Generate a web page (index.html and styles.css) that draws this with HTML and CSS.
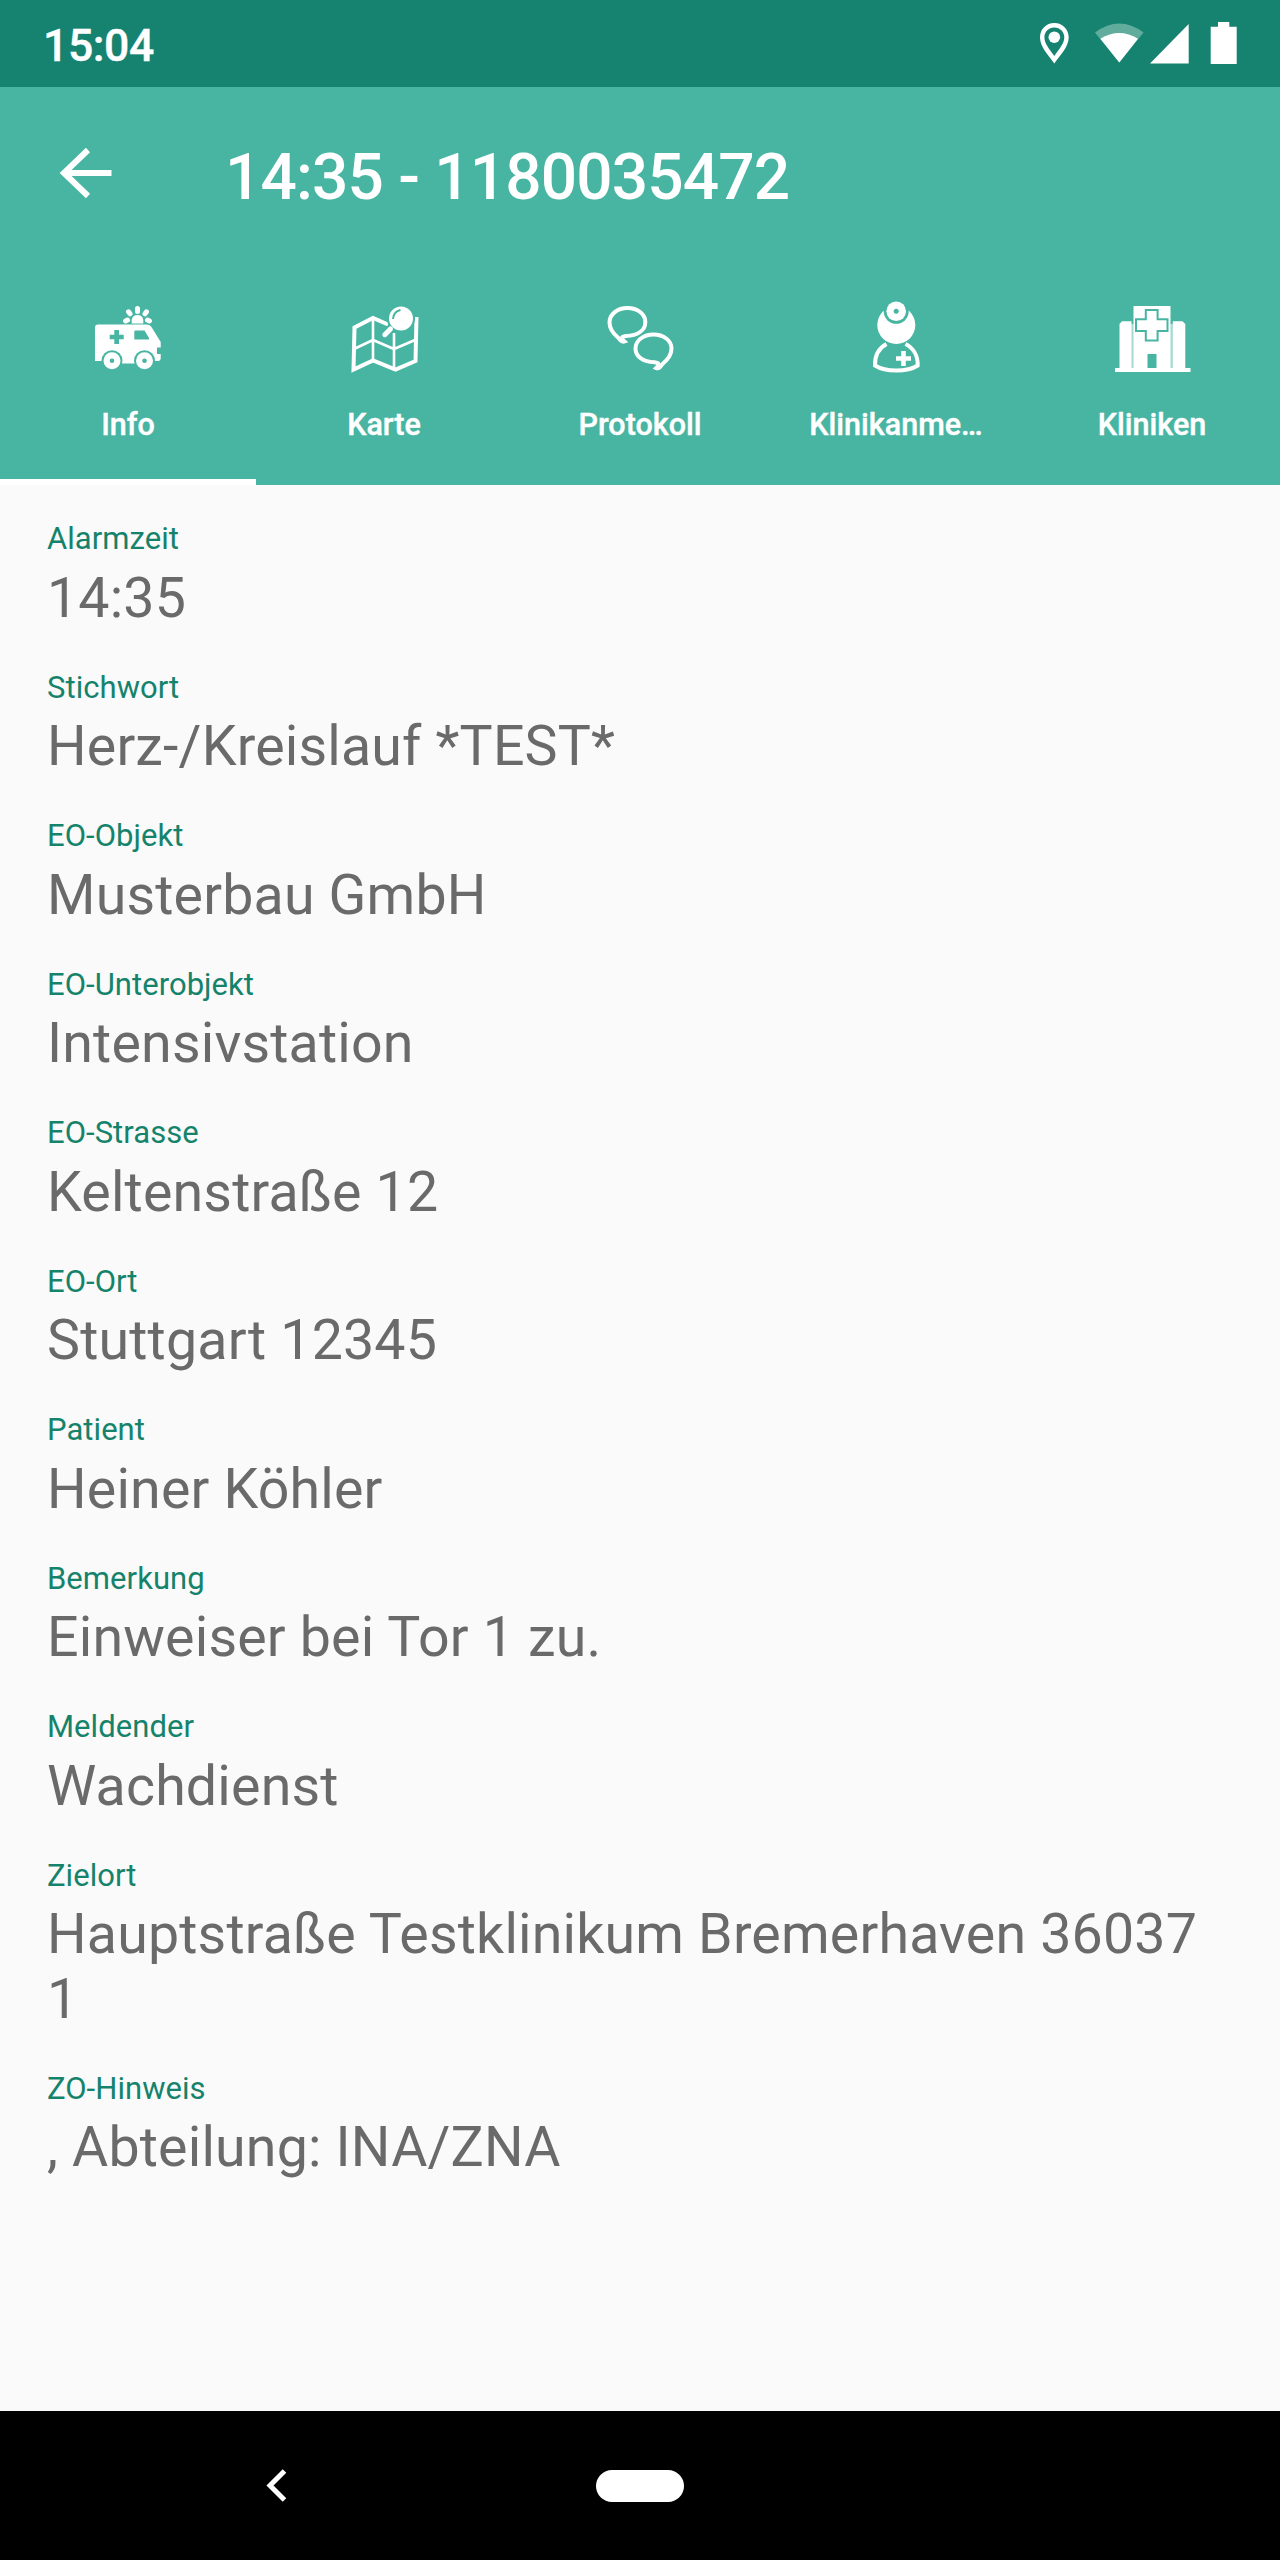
FILE: index.html
```html
<!DOCTYPE html>
<html lang="de">
<head>
<meta charset="utf-8">
<title>14:35 - 1180035472</title>
<link rel="stylesheet" href="styles.css">
</head>
<body>
<div class="screen">
  <div class="status-bar">
    <span class="clock">15:04</span>
    <svg class="status-icons" viewBox="1030 0 220 87">
      <path fill-rule="evenodd" d="M1054.3 23C1046 23 1040 29.300 1040 37.300C1040 47 1047.500 54 1054.300 63.500C1061 54 1068.700 47 1068.700 37.300C1068.700 29.300 1062.500 23 1054.300 23ZM1054.300 27.500C1060 27.500 1064.300 31.800 1064.300 37.300C1064.300 43.500 1059.500 48.500 1054.300 56C1049 48.500 1044.400 43.500 1044.400 37.300C1044.400 31.800 1048.700 27.500 1054.300 27.500Z"/>
      <circle cx="1054.300" cy="37.200" r="5.800"/>
      <path class="faint" d="M1095 32.500Q1119.300 14.500 1143.500 32.500L1119.300 62.500Z"/>
      <path d="M1100.300 38.800Q1119.300 27 1138 38.800L1119.300 62.500Z"/>
      <path d="M1150 63.500L1188.700 24V63.500Z"/>
      <path d="M1218 22H1229.300V26.700H1236.700V64H1210.700V26.700H1218Z"/>
    </svg>
  </div>

  <header class="app-bar">
    <div class="toolbar">
      <svg class="back" viewBox="56 145 60 56"><path d="M88 150L64 173L88 196M64 173H111.500"/></svg>
      <h1 class="title">14:35 - 1180035472</h1>
    </div>
    <nav class="tabs">
      <a class="tab active">
        <svg class="tab-icon" viewBox="88 298 80 80">
          <path d="M98 324.500H147Q150 324.500 151.500 327L160.700 342V347.500H157V354H160.700V358Q160.700 361 158 361H95V327.500Q95 324.500 98 324.500Z"/>
          <path d="M118 356H139V363.500H118Z"/>
          <circle class="cut" cx="112" cy="360.700" r="10.500"/><circle class="cut" cx="144.500" cy="360.700" r="10.500"/>
          <circle cx="112" cy="360.700" r="8.500"/><circle cx="144.500" cy="360.700" r="8.500"/>
          <circle class="cut" cx="112" cy="360.700" r="2.300"/><circle class="cut" cx="144.500" cy="360.700" r="2.300"/>
          <path class="cut" d="M114.300 330H119V334.700H123.700V339.300H119V344H114.300V339.300H109.700V334.700H114.300ZM135.500 330.500H144.500L149 338V339.500H134.300V331.700Q134.300 330.500 135.500 330.500Z"/>
          <path d="M131.700 323.500V320Q132.500 315 137.500 315Q142.500 315 143.300 320V323.500Z"/>
          <path class="rays" d="M137.500 308.500V311.500M128.500 311.800L130 313.800M146.500 311.800L145 313.800M125.500 321L127.500 320M149.500 321L147.500 320"/>
        </svg>
        <span class="tab-label">Info</span>
      </a>
      <a class="tab">
        <svg class="tab-icon" viewBox="344 298 80 80">
          <path class="line" d="M388 324.500L373 318L354.500 327.500L353.500 369.500L373 360.500L395.500 369.500L415.500 361L416.500 317"/>
          <path class="thin" d="M373 318V360.500M394 333V369M355 348.500L373 340L394 349L415 340"/>
          <circle class="cut" cx="401" cy="318.500" r="14"/>
          <circle cx="401" cy="318.500" r="12"/>
          <path class="shine" d="M393 319Q393.500 311.500 400.500 310"/>
          <path class="handle" d="M390.500 329L384.800 334.700"/>
        </svg>
        <span class="tab-label">Karte</span>
      </a>
      <a class="tab">
        <svg class="tab-icon" viewBox="600 298 80 80">
          <path class="line" d="M618.500 338C613 333.500 609.500 328.500 609.500 322.500C609.500 314 617.500 308 627.500 308C637.500 308 645.300 314 645.300 322C645.300 331 637 335.500 626 336C621 336.500 621 338.500 624.500 341.500C622 342.500 620.500 341 618.500 338Z"/>
          <path class="line" d="M662.500 364C668 359.500 671.500 354.500 671.500 348.500C671.500 340.500 663.500 334.500 653.500 334.500C643.500 334.500 635.500 340.500 635.500 348.500C635.500 357 643.500 361.800 654.500 362.300C659.500 362.800 659.500 364.800 656.300 368C659 369 660.500 367 662.500 364Z"/>
        </svg>
        <span class="tab-label">Protokoll</span>
      </a>
      <a class="tab">
        <svg class="tab-icon" viewBox="856 298 80 80">
          <circle cx="896.300" cy="325" r="19"/>
          <circle class="cut" cx="896.200" cy="311.300" r="12.500"/>
          <circle cx="896.200" cy="311.300" r="9.800"/>
          <circle class="cut" cx="896.200" cy="311.300" r="2.500"/>
          <path class="line" d="M886.500 344C879 348 874.800 356 875 365.500Q883 370.500 896.300 370.500Q910 370.500 917.700 365.500C918 356 913.500 348 905.500 344"/>
          <path d="M901.200 351H905.800V356.200H911V360.800H905.800V366H901.200V360.800H896V356.200H901.200Z"/>
        </svg>
        <span class="tab-label">Klinikanme…</span>
      </a>
      <a class="tab">
        <svg class="tab-icon" viewBox="1112 298 80 80">
          <path opacity=".5" d="M1131 324H1134V368H1131ZM1170 324H1174V368H1170Z"/>
          <path d="M1133.500 306H1170.500V368H1133.500ZM1119.500 324L1122 321.300H1131.500V368H1119.500ZM1172.800 321.300H1182.500L1185.300 324V368H1172.800ZM1115 368H1190.500V372H1115Z"/>
          <path class="outline" d="M1145.800 310H1157.600V319.300H1167.500V331H1157.600V340.500H1145.800V331H1136V319.300H1145.800Z"/>
          <path class="cut" d="M1147.500 354H1156.500V368H1147.500Z"/>
        </svg>
        <span class="tab-label">Kliniken</span>
      </a>
    </nav>
  </header>

  <main class="details">
    <div class="field"><div class="label">Alarmzeit</div><div class="value">14:35</div></div>
    <div class="field"><div class="label">Stichwort</div><div class="value">Herz-/Kreislauf *TEST*</div></div>
    <div class="field"><div class="label">EO-Objekt</div><div class="value">Musterbau GmbH</div></div>
    <div class="field"><div class="label">EO-Unterobjekt</div><div class="value">Intensivstation</div></div>
    <div class="field"><div class="label">EO-Strasse</div><div class="value">Keltenstraße 12</div></div>
    <div class="field"><div class="label">EO-Ort</div><div class="value">Stuttgart 12345</div></div>
    <div class="field"><div class="label">Patient</div><div class="value">Heiner Köhler</div></div>
    <div class="field"><div class="label">Bemerkung</div><div class="value">Einweiser bei Tor 1 zu.</div></div>
    <div class="field"><div class="label">Meldender</div><div class="value">Wachdienst</div></div>
    <div class="field"><div class="label">Zielort</div><div class="value">Hauptstraße Testklinikum Bremerhaven 36037 1</div></div>
    <div class="field"><div class="label">ZO-Hinweis</div><div class="value">, Abteilung: INA/ZNA</div></div>
  </main>

  <footer class="nav-bar">
    <svg class="nav-back" viewBox="264 2465 26 41"><path d="M284.500 2471L270 2485.500L284.500 2500"/></svg>
    <span class="home-pill"></span>
  </footer>
</div>
</body>
</html>
```
FILE: styles.css
```css
* {
  box-sizing: border-box;
}

body {
  margin: 0;
  font-family: Roboto, "Liberation Sans", sans-serif;
}

.screen {
  display: flex;
  flex-direction: column;
  width: 1280px;
  height: 2560px;
  background: #fafafa;
}

.status-bar {
  display: flex;
  align-items: center;
  justify-content: space-between;
  height: 87px;
  padding: 0 30px 0 43px;
  background: #15836f;
  color: #fff;
}

.clock {
  padding-top: 4px;
  font-size: 44.500px;
  font-weight: 500;
  letter-spacing: -0.400px;
  -webkit-text-stroke: 0.400px #fff;
}

.status-icons {
  width: 220px;
  height: 87px;
  fill: #fff;
}

.faint {
  opacity: 0.33;
}

.app-bar {
  height: 398px;
  background: #48b5a3;
  color: #fff;
}

.toolbar {
  display: flex;
  align-items: center;
  height: 178px;
  padding: 0 56px;
}

.back {
  width: 60px;
  height: 56px;
  margin-top: -6px;
  fill: none;
  stroke: #fff;
  stroke-width: 6;
}

.title {
  margin: 4px 0 0 109px;
  font-size: 64px;
  font-weight: 500;
  letter-spacing: -0.850px;
  line-height: 76px;
}

.tabs {
  display: grid;
  grid-template-columns: repeat(5, 1fr);
  height: 220px;
}

.tab {
  display: flex;
  flex-direction: column;
  align-items: center;
  padding-top: 33px;
}

.tab.active {
  border-bottom: 6px solid #fff;
}

.tab-icon {
  width: 80px;
  height: 80px;
  fill: #fff;
}

.tab-label {
  margin-top: 29px;
  font-size: 30.500px;
  font-weight: 500;
  line-height: 36px;
  -webkit-text-stroke: 0.400px #fff;
}

.cut {
  fill: #48b5a3;
}

.line,
.thin,
.handle,
.rays,
.shine {
  fill: none;
  stroke: #fff;
  stroke-width: 4;
}

.thin {
  stroke-width: 2.600;
}

.handle,
.rays {
  stroke-width: 5;
  stroke-linecap: round;
}

.shine,
.outline {
  stroke: #48b5a3;
  stroke-width: 2;
}

.details {
  flex: 1;
  padding: 36px 47px 0;
}

.field {
  margin-bottom: 38.500px;
}

.label {
  height: 45.500px;
  color: #15836b;
  font-size: 31px;
  letter-spacing: 0.050px;
  line-height: 36px;
}

.value {
  color: #6a6a6a;
  font-size: 55.500px;
  letter-spacing: 0.180px;
  line-height: 64.500px;
}

.nav-bar {
  display: grid;
  grid-template-columns: 264px 26px 306px 88px;
  align-items: center;
  height: 149px;
  background: #000;
}

.nav-back {
  grid-column: 2;
  width: 26px;
  height: 41px;
  fill: none;
  stroke: #fff;
  stroke-width: 5;
}

.home-pill {
  grid-column: 4;
  height: 32px;
  border-radius: 16px;
  background: #fff;
}
```
